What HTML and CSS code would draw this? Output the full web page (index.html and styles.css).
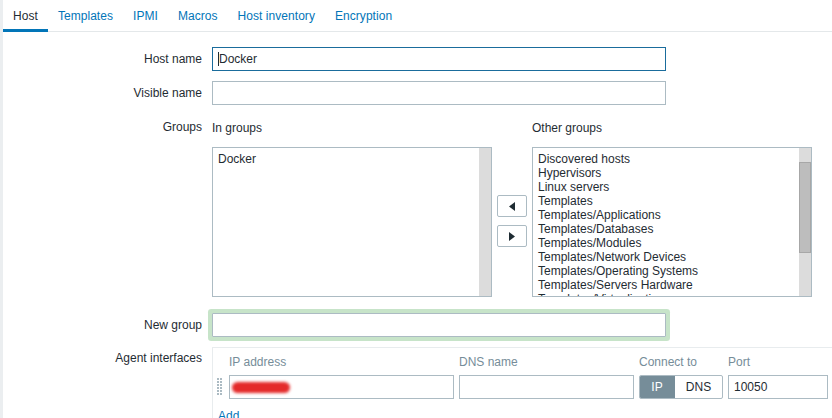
FILE: index.html
```html
<!DOCTYPE html>
<html>
<head>
<meta charset="utf-8">
<link rel="stylesheet" href="styles.css">
</head>
<body>
<div class="page">
  <ul class="tabs">
    <li class="tab active">Host</li>
    <li class="tab">Templates</li>
    <li class="tab">IPMI</li>
    <li class="tab">Macros</li>
    <li class="tab">Host inventory</li>
    <li class="tab">Encryption</li>
  </ul>
  <div class="form">
    <div class="label">Host name</div>
    <div class="field"><div class="input focused"><span class="caret"></span>Docker</div></div>

    <div class="label">Visible name</div>
    <div class="field"><div class="input"></div></div>

    <div class="label">Groups</div>
    <div class="field">
      <div class="twin">
        <div class="twin-head">In groups</div>
        <div></div>
        <div class="twin-head">Other groups</div>
        <div class="list">
          <div class="items"><div>Docker</div></div>
          <div class="track"></div>
        </div>
        <div class="movers">
          <div class="mbtn"><svg width="6" height="9" viewBox="0 0 6 9"><polygon points="6,0 6,9 0,4.5" fill="#1f2c33"/></svg></div>
          <div class="mbtn"><svg width="6" height="9" viewBox="0 0 6 9"><polygon points="0,0 0,9 6,4.5" fill="#1f2c33"/></svg></div>
        </div>
        <div class="list">
          <div class="items">
            <div>Discovered hosts</div>
            <div>Hypervisors</div>
            <div>Linux servers</div>
            <div>Templates</div>
            <div>Templates/Applications</div>
            <div>Templates/Databases</div>
            <div>Templates/Modules</div>
            <div>Templates/Network Devices</div>
            <div>Templates/Operating Systems</div>
            <div>Templates/Servers Hardware</div>
            <div>Templates/Virtualization</div>
            <div>Virtual machines</div>
          </div>
          <div class="track"><div class="thumb"></div></div>
        </div>
      </div>
    </div>

    <div class="label newgroup-label">New group</div>
    <div class="field newgroup-field"><div class="input glow"></div></div>

    <div class="label agent-label">Agent interfaces</div>
    <div class="field">
      <div class="ifaces">
        <div></div>
        <div class="ihead">IP address</div>
        <div class="ihead">DNS name</div>
        <div class="ihead">Connect to</div>
        <div class="ihead">Port</div>

        <div class="handle"><svg width="5" height="18" viewBox="0 0 5 18"><g fill="#acbbc3"><rect x="0" y="0" width="2" height="2"/><rect x="3" y="0" width="2" height="2"/><rect x="0" y="3" width="2" height="2"/><rect x="3" y="3" width="2" height="2"/><rect x="0" y="6" width="2" height="2"/><rect x="3" y="6" width="2" height="2"/><rect x="0" y="9" width="2" height="2"/><rect x="3" y="9" width="2" height="2"/><rect x="0" y="12" width="2" height="2"/><rect x="3" y="12" width="2" height="2"/><rect x="0" y="15" width="2" height="2"/><rect x="3" y="15" width="2" height="2"/></g></svg></div>
        <div class="input ip"><span class="redact"></span></div>
        <div class="input"></div>
        <div class="toggle"><span class="on">IP</span><span class="off">DNS</span></div>
        <div class="input">10050</div>

        <div class="add">Add</div>
      </div>
    </div>
  </div>
</div>
</body>
</html>
```

FILE: styles.css
```css
* { box-sizing: border-box; }
html, body { margin: 0; padding: 0; }
body {
  background: #ebeef0;
  padding-left: 3px;
  font-family: "Liberation Sans", Arial, sans-serif;
  font-size: 12px;
  line-height: 14px;
  color: #1f2c33;
  height: 418px;
  overflow: hidden;
}
.page {
  background: #ffffff;
  height: 100%;
}
.tabs {
  list-style: none;
  margin: 0;
  padding: 0;
  display: flex;
  border-bottom: 1px solid #e4e8ea;
  height: 32px;
}
.tab {
  padding: 9px 10px 6px;
  height: 32px;
  margin-bottom: -1px;
  color: #0275b8;
  border-bottom: 3px solid transparent;
  letter-spacing: 0.05px;
}
.tab.active {
  color: #1f2c33;
  border-bottom-color: #0275b8;
}
.form {
  display: grid;
  grid-template-columns: 199px 1fr;
  column-gap: 10px;
  row-gap: 10px;
  padding-top: 15px;
}
.label {
  text-align: right;
  padding-top: 5px;
  white-space: nowrap;
}
.input {
  height: 24px;
  width: 454px;
  border: 1px solid #acbbc3;
  background: #fff;
  padding: 4px 5px;
  display: flex;
  align-items: center;
  white-space: nowrap;
}
.input.focused { border-color: #1a6c9c; }
.caret {
  display: inline-block;
  width: 1px;
  height: 14px;
  background: #1f2c33;
}
.twin {
  display: grid;
  grid-template-columns: 280px 40px 280px;
}
.twin-head {
  padding-top: 6px;
  height: 32px;
}
.list {
  height: 150px;
  border: 1px solid #acbbc3;
  display: flex;
  overflow: hidden;
}
.items {
  flex: 1;
  padding: 4px 5px 0;
  overflow: hidden;
  white-space: nowrap;
}
.track {
  width: 12px;
  background: #dcdcdc;
  padding-top: 14px;
}
.thumb {
  height: 91px;
  background: #bdbdbd;
  border: 1px solid #a7a7a7;
}
.movers {
  display: flex;
  flex-direction: column;
  align-items: center;
  justify-content: center;
  gap: 8px;
  padding-bottom: 2px;
}
.mbtn {
  width: 30px;
  height: 22px;
  border: 1px solid #acbbc3;
  border-radius: 2px;
  background: #fff;
  display: flex;
  align-items: center;
  justify-content: center;
}
.newgroup-label, .newgroup-field { margin-top: 6px; }
.glow {
  box-shadow: 0 0 0 4px #c7e4c9;
  border-radius: 1px;
}
.agent-label { padding-top: 4px; }
.ifaces {
  border-top: 1px solid #e8ecee;
  border-left: 1px solid #e8ecee;
  padding-top: 7px;
  height: 80px;
  display: grid;
  grid-template-columns: 11px 225px 175px 84px 100px;
  column-gap: 5px;
  align-content: start;
}
.ihead {
  color: #768d99;
  height: 20px;
}
.ifaces .input { width: auto; }
.handle {
  padding: 3px 0 0 4px;
}
.ip { padding-left: 2px; }
.redact {
  display: block;
  width: 58px;
  height: 11px;
  border-radius: 6px;
  background: #e42a2a;
  filter: blur(1.5px);
}
.toggle {
  display: flex;
  height: 24px;
  border: 1px solid #acbbc3;
  border-radius: 2px;
  overflow: hidden;
}
.toggle .on {
  width: 36px;
  background: #768d99;
  color: #fff;
  display: flex;
  align-items: center;
  justify-content: center;
  margin: -1px 0 -1px -1px;
  border-radius: 2px 0 0 2px;
}
.toggle .off {
  flex: 1;
  display: flex;
  align-items: center;
  justify-content: center;
}
.add {
  grid-column: 1 / span 2;
  color: #0275b8;
  padding: 10px 0 0 5px;
}
```
